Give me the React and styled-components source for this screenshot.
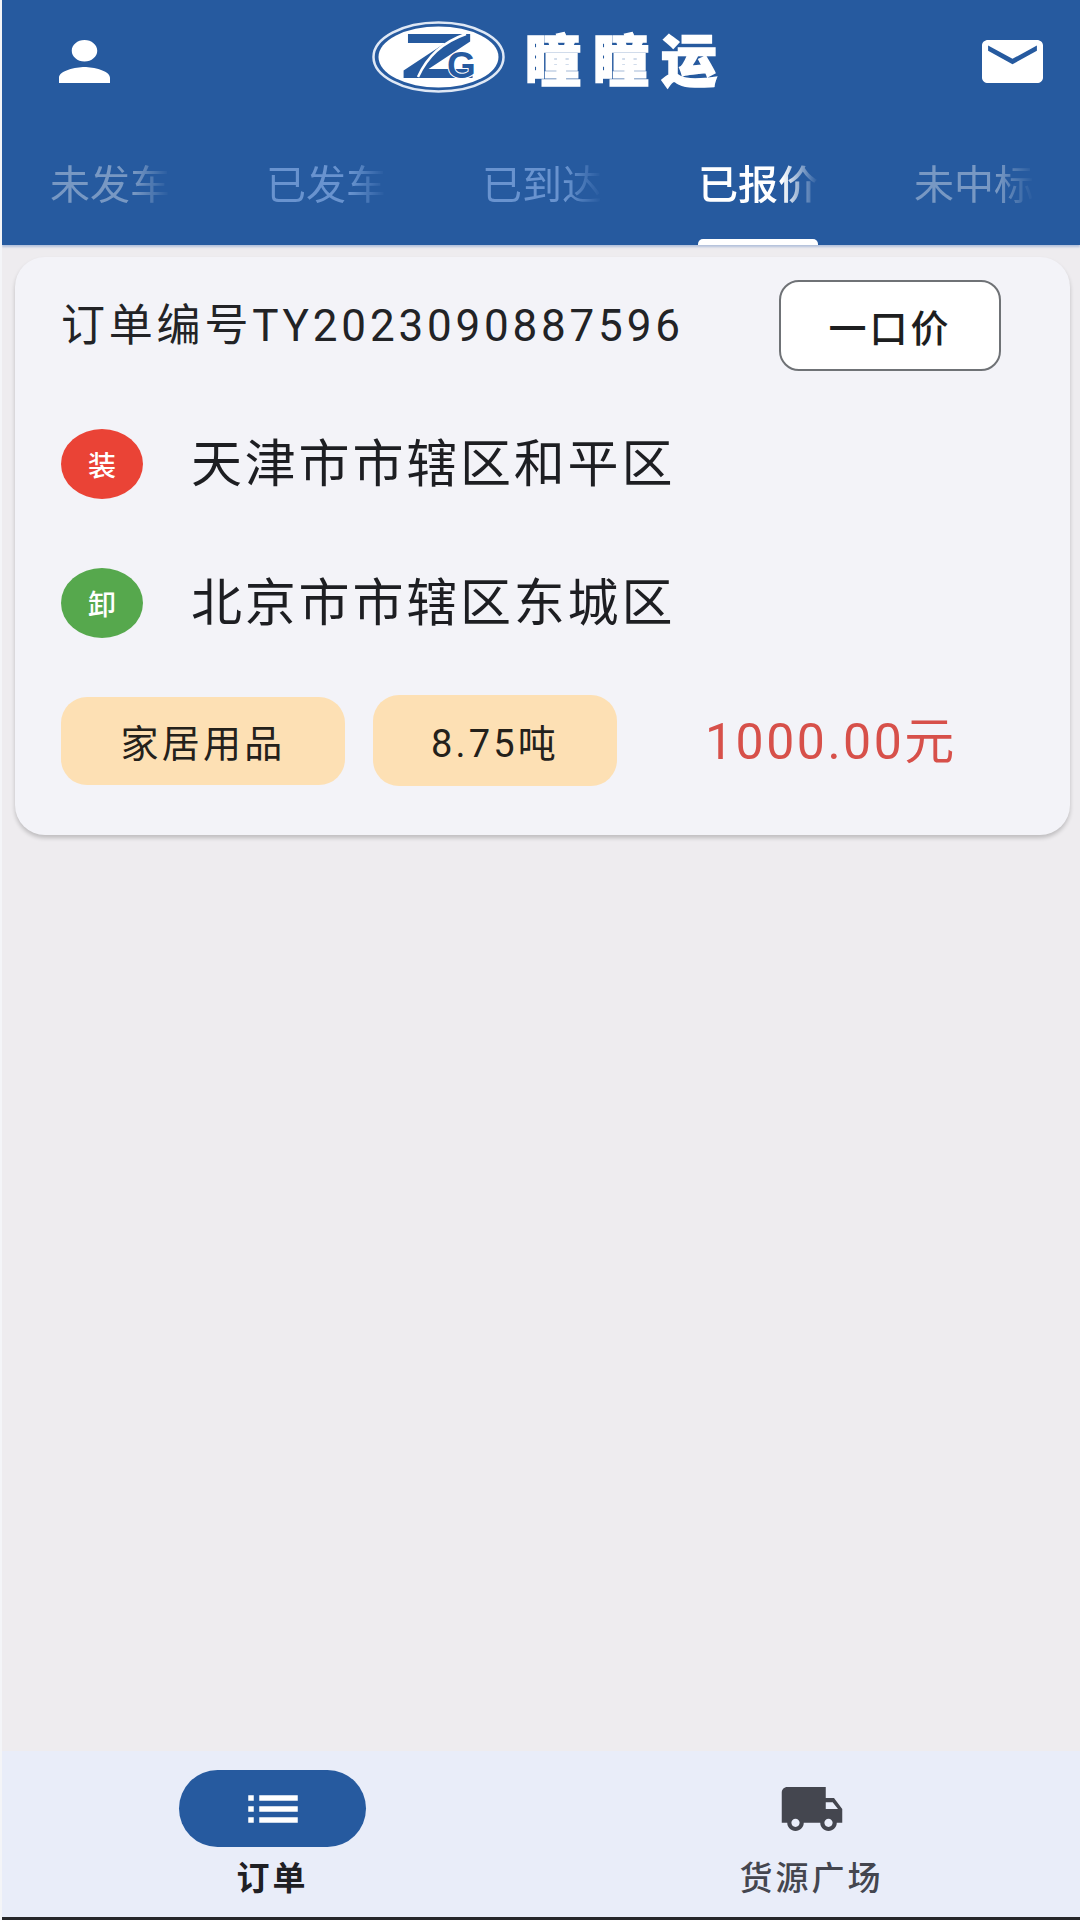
import React from "react";
import styled, { createGlobalStyle } from "styled-components";
import { MdList, MdLocalShipping } from "react-icons/md";

const GlobalStyle = createGlobalStyle`
  html, body {
    margin: 0;
    padding: 0;
    background: #eeecef;
  }
  * {
    box-sizing: border-box;
  }
`;

const Page = styled.div`
  width: 1080px;
  height: 1920px;
  display: flex;
  flex-direction: column;
  overflow: hidden;
  background: #eeecef;
  font-family: Roboto, "Noto Sans CJK SC", sans-serif;
  border-left: 2px solid #f4f5f8;
`;

const Header = styled.header`
  height: 245px;
  flex: none;
  display: flex;
  flex-direction: column;
  background: #265a9f;
  box-shadow: 0 2px 2px rgba(120, 150, 200, 0.5);
`;

const TopBar = styled.div`
  height: 114px;
  padding: 21px 37px 0 57px;
  display: flex;
  align-items: flex-start;
  justify-content: space-between;
`;

const TopIcon = styled.svg`
  display: block;
  margin-top: 19px;
  width: ${({ $w }) => $w}px;
  height: 43px;
  fill: #fff;
`;

const Brand = styled.div`
  display: flex;
  align-items: center;
  gap: 20px;
  height: 72px;
  margin-right: 3px;
`;

const BrandName = styled.span`
  color: #fff;
  font-family: "Noto Sans CJK SC", sans-serif;
  font-size: 56px;
  font-weight: 900;
  line-height: 60px;
  letter-spacing: 12px;
  margin-right: -12px;
  -webkit-text-stroke: 1.5px #fff;
`;

const Tabs = styled.nav`
  flex: 1;
  display: flex;
  gap: 96px;
  padding-left: 48px;
  overflow: hidden;
`;

const Tab = styled.div`
  width: 120px;
  flex: none;
  display: flex;
  flex-direction: column;
  justify-content: space-between;
  padding-top: 44px;
`;

const TabText = styled.span`
  font-family: "Noto Sans CJK SC", sans-serif;
  font-size: 40px;
  line-height: 48px;
  font-weight: ${({ $active }) => ($active ? 500 : 400)};
  white-space: nowrap;
  color: ${({ $active, $dim }) =>
    $active ? "#ffffff" : $dim ? "rgba(255, 255, 255, 0.38)" : "rgba(160, 195, 245, 0.55)"};
  -webkit-mask-image: linear-gradient(90deg, #000 70%, transparent 100%);
  mask-image: linear-gradient(90deg, #000 70%, transparent 100%);
`;

const TabMark = styled.i`
  display: block;
  height: 6px;
  border-radius: 5px 5px 0 0;
  background: ${({ $active }) => ($active ? "#ffffff" : "transparent")};
`;

const Content = styled.main`
  flex: 1;
  padding: 12px 10px 0 13px;
`;

const Card = styled.section`
  height: 578px;
  padding: 23px 69px 0 46px;
  display: flex;
  flex-direction: column;
  background: #f3f3f8;
  border-radius: 30px;
  box-shadow: 0 3px 4px rgba(0, 0, 0, 0.2);
`;

const CardTop = styled.div`
  display: flex;
  align-items: center;
  justify-content: space-between;
  height: 91px;
`;

const OrderNo = styled.span`
  font-size: 44px;
  line-height: 48px;
  letter-spacing: 3.8px;
  white-space: nowrap;
  color: #222326;
`;

const PriceType = styled.button`
  width: 222px;
  height: 91px;
  padding: 0;
  background: #fff;
  border: 2px solid #6f7276;
  border-radius: 20px;
  font-family: "Noto Sans CJK SC", sans-serif;
  font-size: 38px;
  font-weight: 500;
  letter-spacing: 3px;
  color: #1d1e20;
`;

const Stops = styled.div`
  margin-top: 58px;
  display: flex;
  flex-direction: column;
  gap: 69px;
`;

const Stop = styled.div`
  display: flex;
  align-items: center;
  height: 70px;
  gap: 48px;
`;

const StopBadge = styled.span`
  width: 82px;
  height: 70px;
  flex: none;
  display: flex;
  align-items: center;
  justify-content: center;
  border-radius: 50%;
  background: ${({ $color }) => $color};
  color: #fff;
  font-family: "Noto Sans CJK SC", sans-serif;
  font-size: 28px;
  font-weight: 500;
`;

const StopName = styled.span`
  padding-bottom: 9px;
  font-family: "Noto Sans CJK SC", sans-serif;
  font-size: 51px;
  line-height: 60px;
  letter-spacing: 2.8px;
  color: #1d1e22;
`;

const CardBottom = styled.div`
  margin-top: 57px;
  display: flex;
  align-items: center;
`;

const Tag = styled.span`
  height: ${({ $h }) => $h}px;
  width: ${({ $w }) => $w}px;
  margin-right: 28px;
  display: flex;
  align-items: center;
  justify-content: center;
  background: #fde0b4;
  border-radius: 26px;
  font-size: 38px;
  letter-spacing: 3.2px;
  color: #24211b;
`;

const Price = styled.span`
  margin-left: 60px;
  padding-bottom: 8px;
  font-size: 50px;
  letter-spacing: 2.5px;
  color: #d7504a;
`;

const BottomNav = styled.footer`
  height: 169px;
  flex: none;
  display: grid;
  grid-template-columns: 541px 1fr;
  background: #e9edf9;
  border-bottom: 3px solid #26272a;
`;

const NavItem = styled.div`
  padding-top: 19px;
  display: flex;
  flex-direction: column;
  align-items: center;
`;

const NavIconWrap = styled.div`
  width: 187px;
  height: 77px;
  display: flex;
  align-items: center;
  justify-content: center;
  border-radius: 39px;
  background: ${({ $active }) => ($active ? "#265a9f" : "transparent")};
  color: ${({ $active }) => ($active ? "#ffffff" : "#44464f")};
`;

const NavLabel = styled.span`
  margin-top: 7px;
  font-family: "Noto Sans CJK SC", sans-serif;
  font-size: 33px;
  line-height: 44px;
  letter-spacing: 3px;
  font-weight: ${({ $active }) => ($active ? 700 : 500)};
  color: ${({ $active }) => ($active ? "#1f2024" : "#44464f")};
`;

const ListIcon = styled(MdList)`
  width: 80px;
  height: 66px;
`;

const TruckIcon = styled(MdLocalShipping)`
  width: 82px;
  height: 66px;
`;

const tabs = ["未发车", "已发车", "已到达", "已报价", "未中标"];

function Logo() {
  return (
    <svg width="133" height="72" viewBox="0 0 133 72" aria-hidden="true">
      <ellipse cx="66.5" cy="36" rx="65" ry="34.5" fill="none" stroke="#dfe8f5" strokeWidth="2.5" />
      <ellipse cx="66.5" cy="36" rx="60" ry="30.5" fill="#fff" />
      <text x="30" y="56" fontFamily="Liberation Sans" fontWeight="700" fontSize="62" textLength="72" lengthAdjust="spacingAndGlyphs" fill="#265a9f" stroke="#265a9f" strokeWidth="2">Z</text>
      <path d="M46 56 C54 38 68 22 94 13" fill="none" stroke="#fff" strokeWidth="2.5" />
      <text x="75" y="57" fontFamily="Liberation Sans" fontWeight="700" fontSize="37" fill="#265a9f" stroke="#fff" strokeWidth="2" paintOrder="stroke">G</text>
    </svg>
  );
}

export default function App() {
  return (
    <Page>
      <GlobalStyle />
      <Header>
        <TopBar>
          <TopIcon $w={51} viewBox="4 4 16 16" preserveAspectRatio="none">
            <path d="M12 12c2.21 0 4-1.79 4-4s-1.79-4-4-4-4 1.79-4 4 1.79 4 4 4zm0 2c-2.67 0-8 1.34-8 4v2h16v-2c0-2.66-5.33-4-8-4z" />
          </TopIcon>
          <Brand>
            <Logo />
            <BrandName>瞳瞳运</BrandName>
          </Brand>
          <TopIcon $w={61} viewBox="2 4 20 16" preserveAspectRatio="none">
            <path d="M20 4H4c-1.1 0-2 .9-2 2v12c0 1.1.9 2 2 2h16c1.1 0 2-.9 2-2V6c0-1.1-.9-2-2-2zm0 4-8 5-8-5V6l8 5 8-5v2z" />
          </TopIcon>
        </TopBar>
        <Tabs>
          {tabs.map((name, i) => (
            <Tab key={name}>
              <TabText $active={i === 3} $dim={i === 0 || i === 4}>{name}</TabText>
              <TabMark $active={i === 3} />
            </Tab>
          ))}
        </Tabs>
      </Header>

      <Content>
        <Card>
          <CardTop>
            <OrderNo>订单编号TY2023090887596</OrderNo>
            <PriceType>一口价</PriceType>
          </CardTop>
          <Stops>
            <Stop>
              <StopBadge $color="#ea4336">装</StopBadge>
              <StopName>天津市市辖区和平区</StopName>
            </Stop>
            <Stop>
              <StopBadge $color="#56a84d">卸</StopBadge>
              <StopName>北京市市辖区东城区</StopName>
            </Stop>
          </Stops>
          <CardBottom>
            <Tag $w={284} $h={88}>家居用品</Tag>
            <Tag $w={244} $h={91}>8.75吨</Tag>
            <Price>1000.00元</Price>
          </CardBottom>
        </Card>
      </Content>

      <BottomNav>
        <NavItem>
          <NavIconWrap $active>
            <ListIcon />
          </NavIconWrap>
          <NavLabel $active>订单</NavLabel>
        </NavItem>
        <NavItem>
          <NavIconWrap>
            <TruckIcon />
          </NavIconWrap>
          <NavLabel>货源广场</NavLabel>
        </NavItem>
      </BottomNav>
    </Page>
  );
}
